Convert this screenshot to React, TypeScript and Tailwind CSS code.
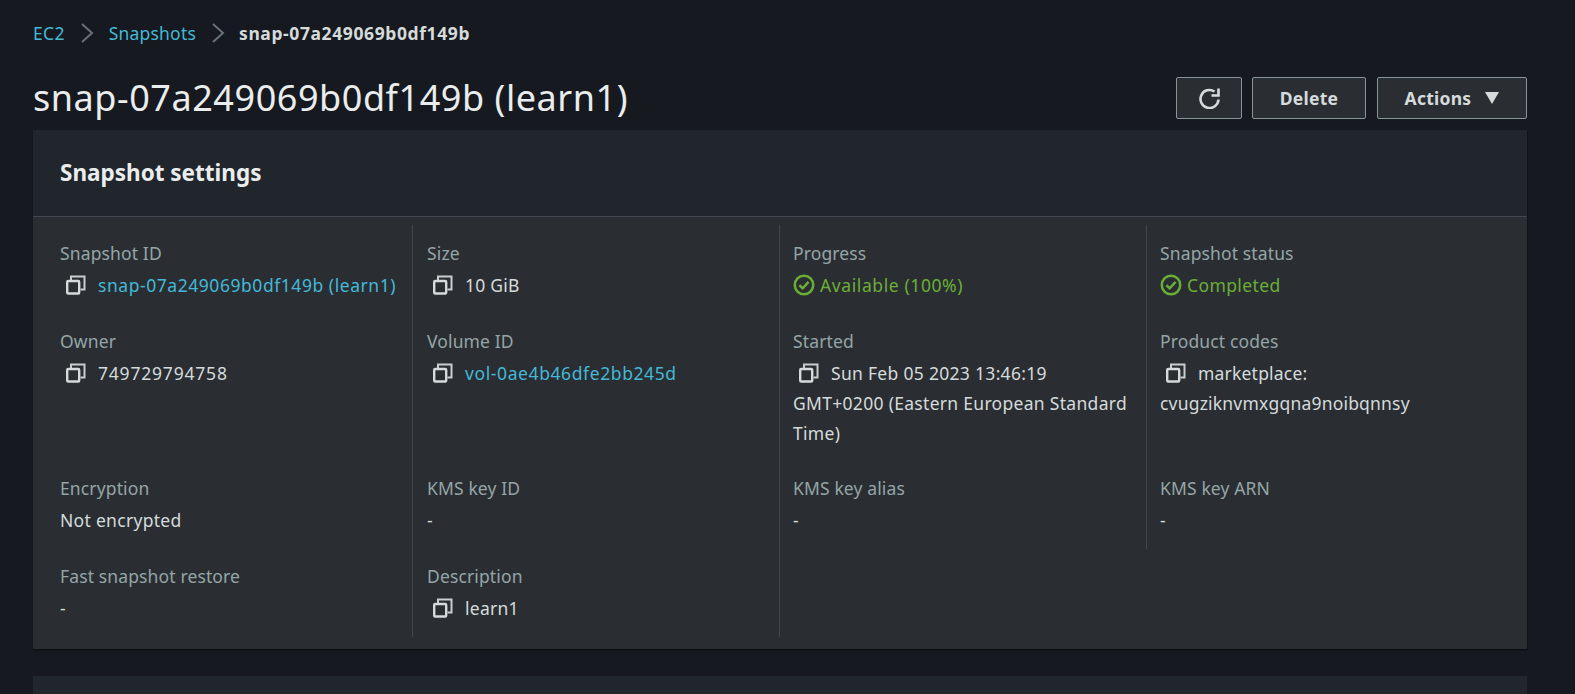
const Copy = () => (
  <svg viewBox="0 0 20 20" className="w-5 h-5 shrink-0" fill="none">
    <path d="M5 5V1.5H18.5V14.5H14.5" stroke="#c8cece" strokeWidth="2" />
    <rect x="1.2" y="6" width="12" height="12.5" rx="1" stroke="#d5dbdb" strokeWidth="2.4" />
  </svg>
);

const Check = () => (
  <svg viewBox="0 0 20 20" className="w-[22px] h-[22px] shrink-0" fill="none" stroke="#6aaf35" strokeWidth="2.3">
    <circle cx="10" cy="10" r="8.4" />
    <path d="M5.8 10.2 8.8 13 14.2 7.2" />
  </svg>
);

const Label = ({ children }: { children: React.ReactNode }) => (
  <div className="text-[#95a5a6] h-6 leading-6 mb-[5px] tracking-[0.13px]">{children}</div>
);

const Cell = ({ label, children, first, tight, shift }: { label: string; children: React.ReactNode; first?: boolean; tight?: boolean; shift?: boolean }) => (
  <div className={`${tight ? "pt-[15px]" : "pt-4"} pr-3 ${first ? "pl-[15px]" : "border-l border-[#414750]"} ${shift ? "pl-[13px]" : ""} ${!first && !shift ? "pl-[14px]" : ""}`}>
    <Label>{label}</Label>
    {children}
  </div>
);

const CopyVal = ({ children, className }: { children: React.ReactNode; className?: string }) => (
  <div className={`leading-[30px] ${className ?? ""}`}>
    <span className="inline-flex align-top h-[30px] items-center pl-[6px] pr-3"><Copy /></span>
    {children}
  </div>
);

const Status = ({ children, className }: { children: React.ReactNode; className?: string }) => (
  <div className={`flex items-center gap-[5px] h-[30px] text-[#6aaf35] ${className ?? ""}`}><Check />{children}</div>
);

const Plain = ({ children }: { children: React.ReactNode }) => <div className="leading-[30px] tracking-[0.3px]">{children}</div>;

const Chevron = () => (
  <svg viewBox="0 0 14 22" className="w-[14px] h-[22px] mx-[15px]" fill="none" stroke="#687078" strokeWidth="2">
    <path d="M2 2 12 11 2 20" />
  </svg>
);

const Btn = ({ children, className }: { children: React.ReactNode; className?: string }) => (
  <button className={`h-[42px] flex items-center justify-center bg-[#2a2e33] border border-[#879596] rounded-[2px] text-[#d5dbdb] font-bold tracking-[0.25px] ${className ?? ""}`}>
    {children}
  </button>
);

export default function App() {
  return (
    <div className="h-[694px] overflow-hidden bg-[#16191f] text-[#d5dbdb] text-[17.5px]" style={{ fontFamily: '"Noto Sans", sans-serif' }}>
      <div className="pl-[33px] pr-[48px]">
        <nav className="flex items-center h-[22px] mt-[22px] text-[#44b9d6]">
          <span className="tracking-[0.3px]">EC2</span>
          <Chevron />
          <span className="tracking-[0.2px]">Snapshots</span>
          <Chevron />
          <span className="text-[#d5dbdb] font-bold tracking-[0.6px] -ml-px">snap-07a249069b0df149b</span>
        </nav>
        <div className="flex items-center justify-between mt-[33px] h-[42px]">
          <h1 className="text-[36px] leading-[42px] text-[#eaeded] font-normal tracking-[0.55px]">snap-07a249069b0df149b (learn1)</h1>
          <div className="flex">
            <Btn className="w-[66px] mr-[10px]">
              <svg viewBox="0 0 21 21" className="w-[21px] h-[21px]" fill="none" stroke="currentColor" strokeWidth="2.6">
                <path d="M19.5 11.5A9 9 0 1 1 15.5 3.5" />
                <path d="M19.5 0.5V7.5H12.5" />
              </svg>
            </Btn>
            <Btn className="w-[114px] mr-[11px]">Delete</Btn>
            <Btn className="w-[150px] gap-[14px]">
              Actions
              <svg viewBox="0 0 14 12" className="w-[14px] h-3" fill="currentColor"><path d="M0 0H14L7 12Z" /></svg>
            </Btn>
          </div>
        </div>
        <section className="mt-[11px] bg-[#2a2e33] shadow-[0_1px_1px_rgba(0,0,0,0.4),1px_1px_1px_rgba(0,0,0,0.15)]">
          <header className="h-[87px] bg-[#21252c] border-b border-[#414750] flex items-center pl-[27px]">
            <h2 className="text-[22.5px] font-bold text-[#eaeded]">Snapshot settings</h2>
          </header>
          <div className="grid grid-cols-[367px_367px_367px_367px] grid-rows-[88px_148px_88px_88px] pl-[12px] pt-2 pb-3">
            <Cell first label="Snapshot ID"><CopyVal className="text-[#44b9d6] tracking-[0.55px]">snap-07a249069b0df149b (learn1)</CopyVal></Cell>
            <Cell label="Size"><CopyVal className="tracking-[0.25px]">10 GiB</CopyVal></Cell>
            <Cell shift label="Progress"><Status className="tracking-[0.6px]">Available (100%)</Status></Cell>
            <Cell shift label="Snapshot status"><Status className="tracking-[0.38px]">Completed</Status></Cell>

            <Cell first label="Owner"><CopyVal className="tracking-[0.8px]">749729794758</CopyVal></Cell>
            <Cell label="Volume ID"><CopyVal className="text-[#44b9d6] tracking-[0.6px]">vol-0ae4b46dfe2bb245d</CopyVal></Cell>
            <Cell shift label="Started"><CopyVal className="tracking-[0.3px]">Sun Feb 05 2023 13:46:19 GMT+0200 (Eastern European Standard Time)</CopyVal></Cell>
            <Cell shift label="Product codes"><CopyVal className="tracking-[0.2px]">marketplace: cvugziknvmxgqna9noibqnnsy</CopyVal></Cell>

            <Cell tight first label="Encryption"><Plain>Not encrypted</Plain></Cell>
            <Cell tight label="KMS key ID"><Plain>-</Plain></Cell>
            <Cell tight shift label="KMS key alias"><Plain>-</Plain></Cell>
            <Cell tight shift label="KMS key ARN"><Plain>-</Plain></Cell>

            <Cell tight first label="Fast snapshot restore"><Plain>-</Plain></Cell>
            <Cell tight label="Description"><CopyVal className="tracking-[0.25px]">learn1</CopyVal></Cell>
            <div className="border-l border-[#414750]" />
          </div>
        </section>
        <div className="mt-[27px] h-[40px] bg-[#21252c]" />
      </div>
    </div>
  );
}
